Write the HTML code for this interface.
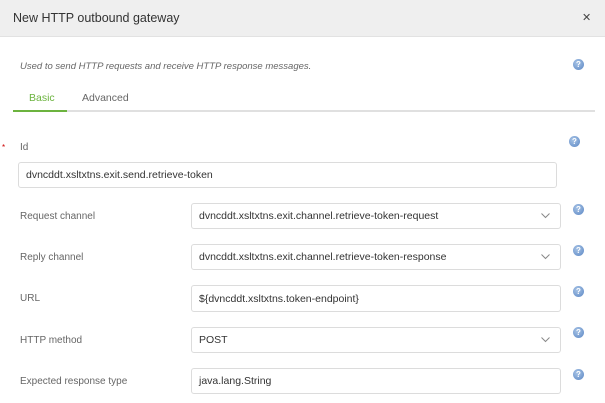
<!DOCTYPE html>
<html><head><meta charset="utf-8"><style>
*{margin:0;padding:0;box-sizing:border-box}
body{width:605px;height:403px;overflow:hidden;background:#fff;font-family:"Liberation Sans",sans-serif;color:#444;position:relative}
.hdr{position:absolute;left:0;top:0;width:605px;height:37px;background:#efefef;border-bottom:1px solid #e2e2e2}
.title{position:absolute;left:13px;top:11px;font-size:12.5px;color:#333}
.x{position:absolute;left:582px;top:11px;font-size:11px;color:#444}
.a{position:absolute;white-space:nowrap}
.desc{left:20px;top:61px;font-size:9.5px;font-style:italic;color:#666}
.lbl{font-size:10px;color:#666;left:20px}
.box{position:absolute;border:1px solid #dcdcdc;border-radius:3px;background:#fff;font-size:10.5px;color:#333;padding-left:7px;display:flex;align-items:center}
.sel svg{position:absolute;right:10px;top:50%;margin-top:-3px}
.help{position:absolute;width:11px;height:11px;border-radius:50%;background:radial-gradient(circle at 40% 35%,#a8c4e6,#5a86c4);color:#fff;font-size:8px;font-weight:bold;line-height:11px;text-align:center}
</style></head><body>
<div class="hdr"><div class="title">New HTTP outbound gateway</div><div class="x">✕</div></div>
<div class="a desc">Used to send HTTP requests and receive HTTP response messages.</div>
<div class="help" style="left:573px;top:59px">?</div>
<div class="a" style="left:29px;top:92px;font-size:10.5px;color:#6cb33f">Basic</div>
<div class="a" style="left:82px;top:92px;font-size:10.5px;color:#666">Advanced</div>
<div class="a" style="left:13px;top:110px;width:582px;height:2px;background:#e0e0e0"></div>
<div class="a" style="left:13px;top:110px;width:54px;height:2px;background:#6cb33f"></div>
<div class="a" style="left:2px;top:143px;font-size:8px;color:#c00">*</div>
<div class="a lbl" style="top:142px">Id</div>
<div class="help" style="left:569px;top:136px">?</div>
<div class="box" style="left:18px;top:162px;width:539px;height:26px">dvncddt.xsltxtns.exit.send.retrieve-token</div>

<div class="a lbl" style="top:211px">Request channel</div>
<div class="box sel" style="left:191px;top:203px;width:370px;height:26px">dvncddt.xsltxtns.exit.channel.retrieve-token-request<svg width="9" height="6"><path d="M0.5 0.5L4.5 4.5L8.5 0.5" fill="none" stroke="#888"/></svg></div>
<div class="help" style="left:573px;top:204px">?</div>

<div class="a lbl" style="top:252px">Reply channel</div>
<div class="box sel" style="left:191px;top:244px;width:370px;height:26px">dvncddt.xsltxtns.exit.channel.retrieve-token-response<svg width="9" height="6"><path d="M0.5 0.5L4.5 4.5L8.5 0.5" fill="none" stroke="#888"/></svg></div>
<div class="help" style="left:573px;top:245px">?</div>

<div class="a lbl" style="top:293px">URL</div>
<div class="box" style="left:191px;top:285px;width:370px;height:27px">${dvncddt.xsltxtns.token-endpoint}</div>
<div class="help" style="left:573px;top:286px">?</div>

<div class="a lbl" style="top:335px">HTTP method</div>
<div class="box sel" style="left:191px;top:327px;width:370px;height:26px">POST<svg width="9" height="6"><path d="M0.5 0.5L4.5 4.5L8.5 0.5" fill="none" stroke="#888"/></svg></div>
<div class="help" style="left:573px;top:327px">?</div>

<div class="a lbl" style="top:376px">Expected response type</div>
<div class="box" style="left:191px;top:368px;width:370px;height:26px">java.lang.String</div>
<div class="help" style="left:573px;top:369px">?</div>
</body></html>
